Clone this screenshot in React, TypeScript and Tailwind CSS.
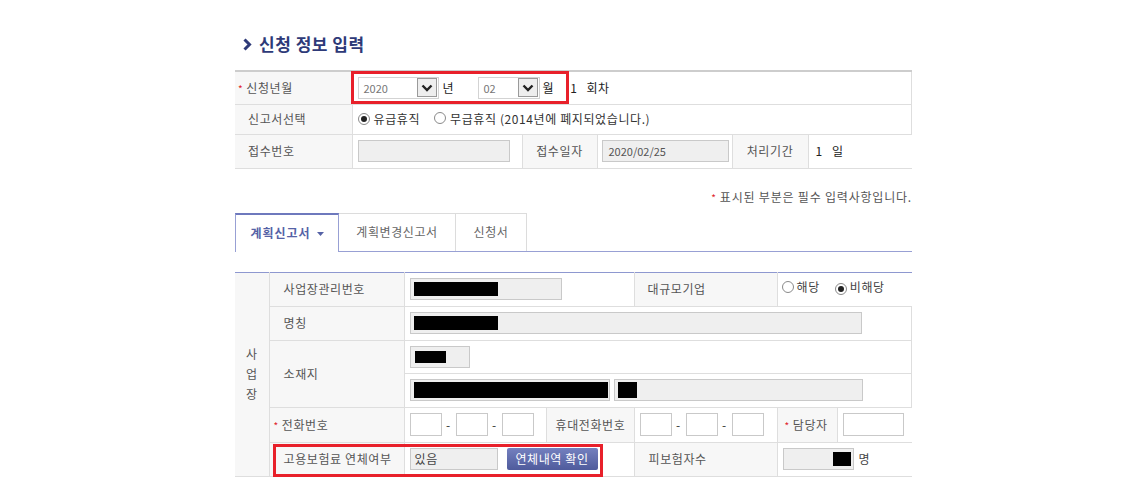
import React from "react";

function Select({ value, width }: { value: string; width: string }) {
  return (
    <div className={`flex h-[22px] ${width} items-center justify-between border border-[#d3d3d3] bg-white pl-[5px] pr-[1px]`}>
      <span className="text-[11px] tracking-normal text-[#777]">{value}</span>
      <span className="flex h-[19px] w-[20px] items-center justify-center border border-[#9a9a9a] bg-[#eeeeee]">
        <svg width="12" height="8" viewBox="0 0 12 8">
          <polyline points="1.5,1.5 6,6 10.5,1.5" fill="none" stroke="#222" strokeWidth="2.4" />
        </svg>
      </span>
    </div>
  );
}

function Radio({ checked }: { checked?: boolean }) {
  return (
    <span className="inline-flex h-[12px] w-[12px] items-center justify-center rounded-full border border-[#8a8a8a] bg-white">
      {checked && <span className="h-[6px] w-[6px] rounded-full bg-[#222]" />}
    </span>
  );
}

function Box({ className, children }: { className: string; children?: React.ReactNode }) {
  return (
    <div className={`flex h-[22px] items-center border border-[#c9c9c9] bg-[#efefef] ${className}`}>
      {children}
    </div>
  );
}

function Blank() {
  return <div className="h-[23px] w-[32px] border border-[#c9c9c9] bg-white" />;
}

function Star() {
  return <span className="mr-[3px] text-[10px] text-[#e0262c]">*</span>;
}

const label = "border-b border-r border-[#dedede] bg-[#f7f7f7] text-[12px] text-[#555]";
const cell = "border-b border-r border-[#dedede] px-[5px] text-[12px] text-[#333]";

export default function App() {
  return (
    <div className="min-h-[500px] bg-white tracking-[0.6px] [font-family:'Noto_Sans_CJK_KR','Noto_Sans',sans-serif]">
      <div className="ml-[235px] w-[677px] pt-[32px]">
        {/* Title */}
        <div className="flex h-[24px] items-center pl-[8px]">
          <svg width="9" height="13" viewBox="0 0 9 13" className="mr-[7px]">
            <polyline points="1.5,1.5 6.5,6.5 1.5,11.5" fill="none" stroke="#2e3a78" strokeWidth="3" />
          </svg>
          <h2 className="text-[17px] font-bold tracking-[0.5px] text-[#2e3a78]">신청 정보 입력</h2>
        </div>

        {/* Application table */}
        <div className="relative mt-[14px]">
          <table className="w-full table-fixed border-collapse border-t-2 border-t-[#cdcdcd]">
            <colgroup>
              <col className="w-[117px]" />
              <col className="w-[170px]" />
              <col className="w-[75px]" />
              <col className="w-[135px]" />
              <col className="w-[76px]" />
              <col />
            </colgroup>
            <tbody>
              <tr className="h-[33px]">
                <td className={`${label} pl-[3px]`}>
                  <Star />
                  신청년월
                </td>
                <td colSpan={5} className={cell}>
                  <div className="flex items-center">
                    <Select value="2020" width="w-[81px]" />
                    <span className="ml-[4px] w-[35px] text-[12px] text-[#222]">년</span>
                    <Select value="02" width="w-[62px]" />
                    <span className="ml-[3px] text-[12px] text-[#222]">월</span>
                    <span className="ml-[16px] text-[12px] text-[#222]">1</span>
                    <span className="ml-[9px] text-[12px] text-[#222]">회차</span>
                  </div>
                </td>
              </tr>
              <tr className="h-[30px]">
                <td className={`${label} pl-[13px]`}>신고서선택</td>
                <td colSpan={5} className={cell}>
                  <div className="flex items-center text-[12px] text-[#333]">
                    <Radio checked />
                    <span className="ml-[4px]">유급휴직</span>
                    <span className="ml-[14px]">
                      <Radio />
                    </span>
                    <span className="ml-[4px]">무급휴직 (2014년에 폐지되었습니다.)</span>
                  </div>
                </td>
              </tr>
              <tr className="h-[34px]">
                <td className={`${label} pl-[13px]`}>접수번호</td>
                <td className={cell}>
                  <Box className="w-[152px]" />
                </td>
                <td className={`${label} text-center`}>접수일자</td>
                <td className={`${cell} pl-[4px]`}>
                  <Box className="w-[127px] pl-[6px] text-[11px] tracking-normal text-[#555]">2020/02/25</Box>
                </td>
                <td className={`${label} text-center`}>처리기간</td>
                <td className="border-b border-[#dedede] pl-[7px] text-[12px] text-[#222]">
                  1 <span className="ml-[6px]">일</span>
                </td>
              </tr>
            </tbody>
          </table>
          <div className="pointer-events-none absolute left-[116px] top-[1px] h-[33px] w-[218px] border-[3px] border-[#e8202a]" />
        </div>

        {/* Note */}
        <p className="mt-[21px] h-[14px] text-right text-[12px] leading-[14px] tracking-[0.8px] text-[#555]">
          <Star />
          표시된 부분은 필수 입력사항입니다.
        </p>

        {/* Tabs */}
        <div className="mt-[9px] flex h-[39px] items-stretch border-b border-[#98a0d4]">
          <div className="relative -mb-px flex w-[104px] items-center justify-center border-x border-t-2 border-[#98a0d4] border-t-[#6e79bd] bg-white text-[12px] font-bold tracking-[1px] text-[#5562a6]">
            계획신고서
            <svg width="7" height="4" viewBox="0 0 7 4" className="ml-[6px] mt-[2px]">
              <polygon points="0,0 7,0 3.5,4" fill="#5562a6" />
            </svg>
          </div>
          <div className="flex w-[117px] items-center justify-center border-r border-t border-[#dcdcdc] text-[12px] text-[#666]">
            계획변경신고서
          </div>
          <div className="flex w-[71px] items-center justify-center border-r border-t border-[#dcdcdc] text-[12px] text-[#666]">
            신청서
          </div>
        </div>

        {/* Workplace table */}
        <div className="relative mt-[20px]">
          <table className="w-full table-fixed border-collapse border-t border-b border-t-[#8e98d0] border-b-[#b8bde0]">
            <colgroup>
              <col className="w-[34px]" />
              <col className="w-[135px]" />
              <col className="w-[142px]" />
              <col className="w-[88px]" />
              <col className="w-[143px]" />
              <col className="w-[60px]" />
              <col />
            </colgroup>
            <tbody>
              <tr className="h-[34px]">
                <td rowSpan={6} className={`${label} text-center leading-[20px]`}>
                  사<br />업<br />장
                </td>
                <td className={`${label} pl-[14px]`}>사업장관리번호</td>
                <td colSpan={2} className={cell}>
                  <Box className="w-[152px] pl-[3px]">
                    <div className="h-[14px] w-[84px] bg-black" />
                  </Box>
                </td>
                <td className={`${label} pl-[13px]`}>대규모기업</td>
                <td colSpan={2} className="border-b border-[#dedede] pl-[4px] text-[12px] text-[#444]">
                  <div className="-mt-[4px] flex items-center">
                    <Radio />
                    <span className="ml-[3px]">해당</span>
                    <span className="ml-[15px]">
                      <Radio checked />
                    </span>
                    <span className="ml-[3px]">비해당</span>
                  </div>
                </td>
              </tr>
              <tr className="h-[34px]">
                <td className={`${label} pl-[14px]`}>명칭</td>
                <td colSpan={5} className={cell}>
                  <Box className="w-[452px] pl-[3px]">
                    <div className="h-[14px] w-[84px] bg-black" />
                  </Box>
                </td>
              </tr>
              <tr className="h-[33px]">
                <td rowSpan={2} className={`${label} pl-[14px]`}>소재지</td>
                <td colSpan={5} className={cell}>
                  <Box className="w-[60px] pl-[4px]">
                    <div className="h-[12px] w-[31px] bg-black" />
                  </Box>
                </td>
              </tr>
              <tr className="h-[34px]">
                <td colSpan={5} className={cell}>
                  <div className="flex items-center gap-[4px]">
                    <Box className="w-[200px] pl-[3px]">
                      <div className="h-[16px] w-[194px] bg-black" />
                    </Box>
                    <Box className="w-[249px] pl-[3px]">
                      <div className="h-[16px] w-[19px] bg-black" />
                    </Box>
                  </div>
                </td>
              </tr>
              <tr className="h-[35px]">
                <td className={`${label} pl-[4px]`}>
                  <Star />
                  전화번호
                </td>
                <td className={cell}>
                  <div className="flex items-center">
                    <Blank />
                    <span className="w-[14px] text-center text-[12px]">-</span>
                    <Blank />
                    <span className="w-[14px] text-center text-[12px]">-</span>
                    <Blank />
                  </div>
                </td>
                <td className={`${label} pl-[9px]`}>휴대전화번호</td>
                <td className={cell}>
                  <div className="flex items-center">
                    <Blank />
                    <span className="w-[14px] text-center text-[12px]">-</span>
                    <Blank />
                    <span className="w-[14px] text-center text-[12px]">-</span>
                    <Blank />
                  </div>
                </td>
                <td className={`${label} pl-[7px]`}>
                  <Star />
                  담당자
                </td>
                <td className="border-b border-[#dedede] px-[5px]">
                  <div className="h-[23px] w-[61px] border border-[#c9c9c9] bg-white" />
                </td>
              </tr>
              <tr className="h-[34px]">
                <td className={`${label} pl-[14px]`}>고용보험료 연체여부</td>
                <td colSpan={2} className={cell}>
                  <div className="flex items-center">
                    <Box className="w-[88px] pl-[4px] text-[12px] text-[#444]">있음</Box>
                    <button className="ml-[9px] h-[22px] w-[91px] rounded-[2px] bg-gradient-to-b from-[#7480bf] to-[#4f5b9c] text-[12px] tracking-[0.6px] text-white">
                      연체내역 확인
                    </button>
                  </div>
                </td>
                <td className={`${label} pl-[14px]`}>피보험자수</td>
                <td colSpan={2} className="border-b border-[#dedede] px-[5px] text-[12px] text-[#444]">
                  <div className="flex items-center">
                    <Box className="w-[71px] justify-end pr-[2px]">
                      <div className="h-[14px] w-[18px] bg-black" />
                    </Box>
                    <span className="ml-[5px]">명</span>
                  </div>
                </td>
              </tr>
            </tbody>
          </table>
          <div className="pointer-events-none absolute left-[38px] top-[172px] h-[33px] w-[330px] border-[3px] border-[#e8202a]" />
        </div>
      </div>
    </div>
  );
}
